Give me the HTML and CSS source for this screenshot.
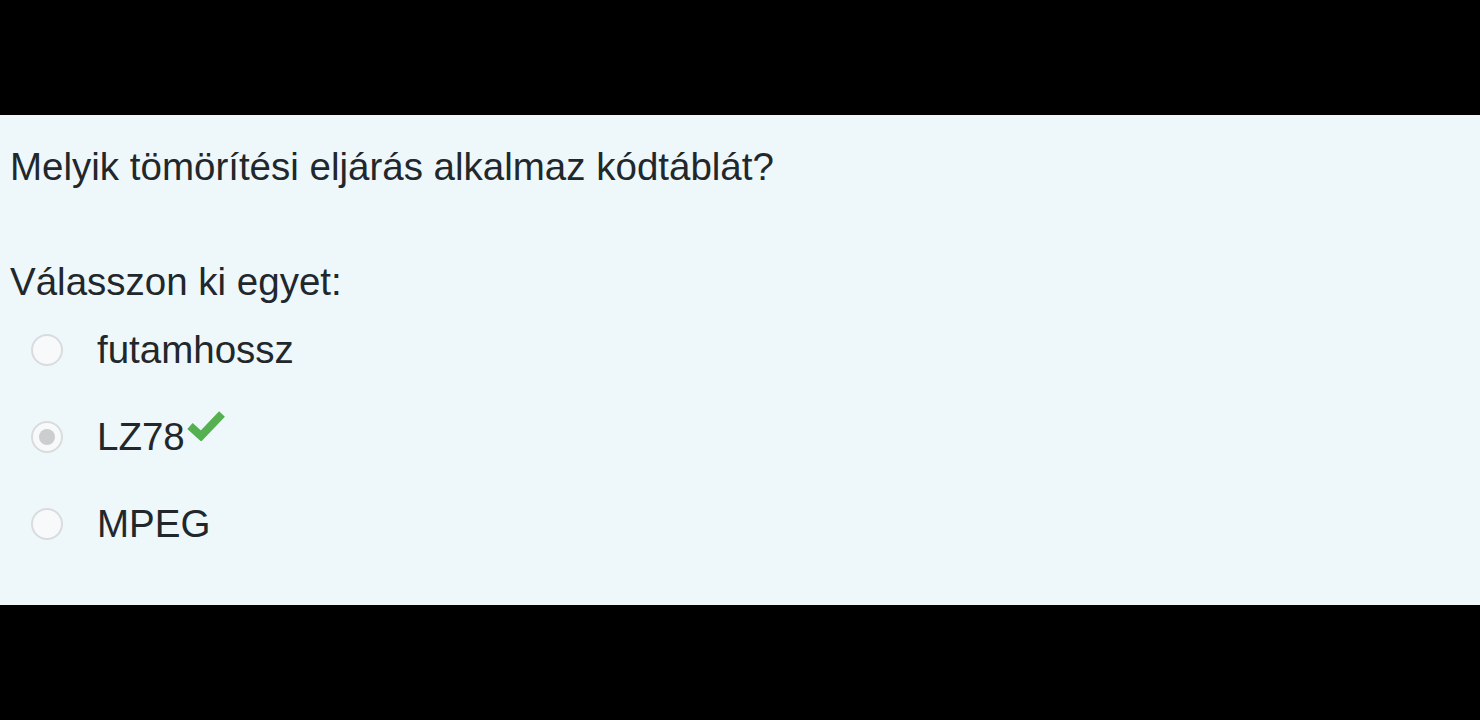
FILE: index.html
```html
<!DOCTYPE html>
<html>
<head>
<meta charset="utf-8">
<link rel="stylesheet" href="styles.css">
</head>
<body>
<div class="top"></div>
<div class="panel">
  <div class="question">Melyik tömörítési eljárás alkalmaz kódtáblát?</div>
  <div class="prompt">Válasszon ki egyet:</div>
  <div class="answers">
    <div class="answer"><span class="radio"></span><span class="label">futamhossz</span></div>
    <div class="answer"><span class="radio checked"></span><span class="label">LZ78</span><svg class="tick" viewBox="0 0 38 32" width="38" height="32"><path d="M3 17 L14 27 L35 5" fill="none" stroke="#55b04f" stroke-width="8" stroke-linejoin="miter" stroke-linecap="butt"/></svg></div>
    <div class="answer"><span class="radio"></span><span class="label">MPEG</span></div>
  </div>
</div>
</body>
</html>
```
FILE: styles.css
```css
html, body { margin: 0; padding: 0; background: #000; }
body { font-family: "Liberation Sans", Arial, sans-serif; color: #22272b; }
.top { height: 115px; background: #000; }
.panel {
  height: 490px;
  background: #eef8fb;
  box-sizing: border-box;
  padding: 28px 10px 0 10px;
}
.question { font-size: 38.5px; line-height: 48px; }
.prompt { font-size: 38.5px; line-height: 48px; margin-top: 67px; }
.answers { display: flex; flex-direction: column; gap: 39px; margin-top: 20px; padding-left: 21px; }
.answer { display: flex; align-items: center; height: 48px; }
.radio {
  width: 32px; height: 32px; border-radius: 50%;
  border: 2px solid #d9dbdd; background: #f7f9fa;
  box-sizing: border-box; position: relative; flex: none;
}
.radio.checked::after {
  content: ""; position: absolute; left: 6px; top: 6px; width: 16px; height: 16px;
  border-radius: 50%; background: #cbcdcf;
}
.label { font-size: 38.5px; margin-left: 34px; }
.tick { align-self: flex-start; margin-top: -4px; margin-left: 2px; flex: none; }
```
